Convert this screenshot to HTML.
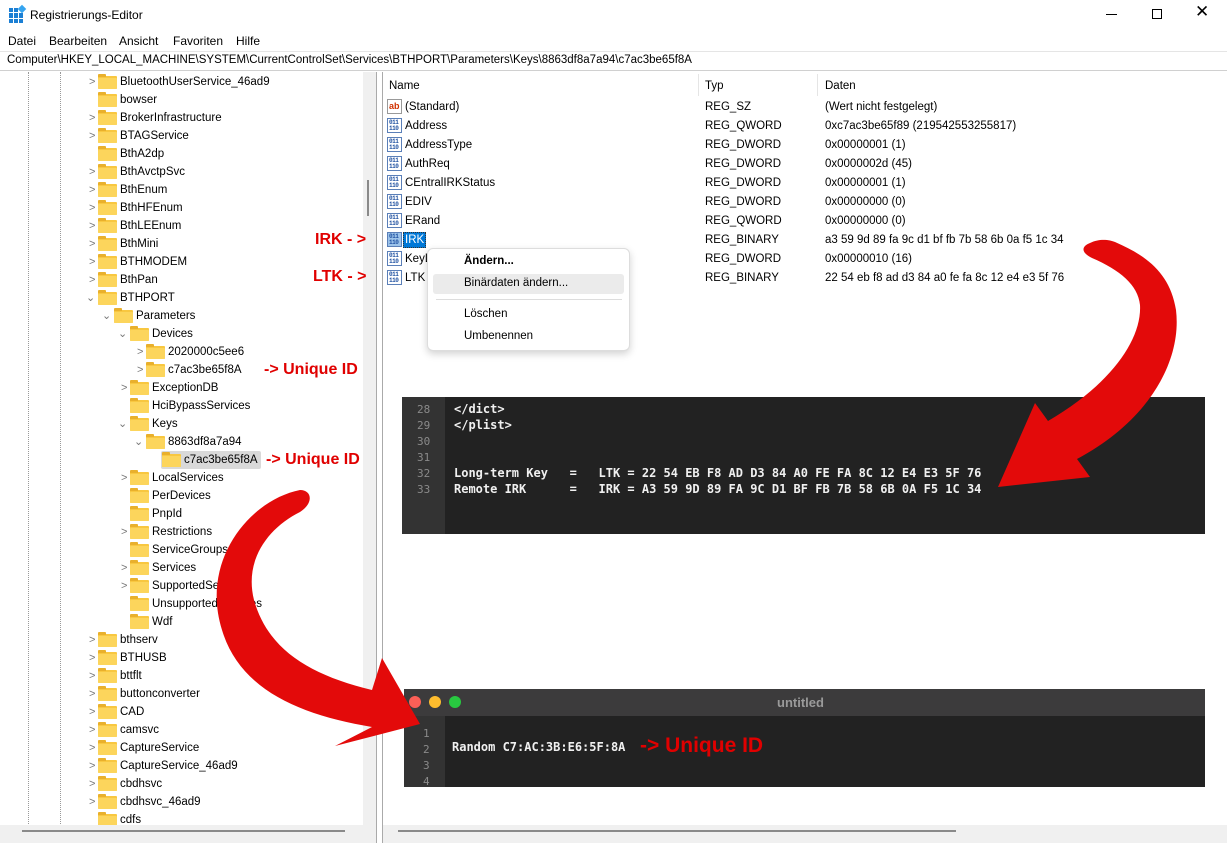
<!DOCTYPE html>
<html><head><meta charset="utf-8"><style>
*{margin:0;padding:0;box-sizing:border-box}
body{width:1227px;height:843px;overflow:hidden;background:#fff;font-family:"Liberation Sans",sans-serif;font-size:12px;color:#000;position:relative}
.a{position:absolute;white-space:nowrap}
.r{position:absolute;height:18px;line-height:18px;white-space:nowrap;font-size:11.5px}
.f{position:absolute;top:3px;width:19px;height:13px;background:#f8c740;border-radius:1px}
.f:before{content:"";position:absolute;left:0;top:-2px;width:8px;height:3px;background:#e9b02c;border-radius:1px 1px 0 0}
.f:after{content:"";position:absolute;left:0;top:2px;width:19px;height:11px;background:#fcd55c;border-radius:1px}
.c{position:absolute;top:0;color:#777;font-size:11px}
.t{position:absolute;top:0}
.ic{position:absolute;width:15px;height:15px;border:1px solid #5a7fb8;background:#fff;font:bold 6px/6px "Liberation Mono",monospace;color:#1d4fa0;letter-spacing:-0.5px;padding:1px 0 0 1px;overflow:hidden}
.red{color:#e00000;font-weight:bold;font-size:16px}
.code{font-family:"DejaVu Sans Mono","Liberation Mono",monospace;font-size:12px;color:#f0f0f0;font-weight:bold}
.ln{font-family:"DejaVu Sans Mono",monospace;font-size:11px;color:#8a8a8a}
.v{font-size:11.5px}
</style></head><body>
<div class="a" style="left:9px;top:8px;width:15px;height:15px;display:grid;grid-template-columns:repeat(3,4px);gap:1px">
<i style="background:#1b7fd4"></i><i style="background:#1b7fd4"></i><i style="background:#fff"></i><i style="background:#1b7fd4"></i><i style="background:#1b7fd4"></i><i style="background:#1b7fd4"></i><i style="background:#1b7fd4"></i><i style="background:#1b7fd4"></i><i style="background:#1b7fd4"></i></div>
<div class="a" style="left:19px;top:6px;width:6px;height:6px;background:#35a4f0;transform:rotate(45deg)"></div>
<div class="a" style="left:30px;top:8px;font-size:12px">Registrierungs-Editor</div>
<div class="a" style="left:1106px;top:14px;width:11px;height:1px;background:#000"></div>
<div class="a" style="left:1152px;top:9px;width:10px;height:10px;border:1px solid #000"></div>
<div class="a" style="left:1195px;top:2px;font-size:17px;font-weight:300">✕</div>
<div class="a" style="left:8px;top:34px">Datei</div>
<div class="a" style="left:49px;top:34px">Bearbeiten</div>
<div class="a" style="left:119px;top:34px">Ansicht</div>
<div class="a" style="left:173px;top:34px">Favoriten</div>
<div class="a" style="left:236px;top:34px">Hilfe</div>
<div class="a" style="left:0;top:51px;width:1227px;height:20px;border-top:1px solid #e5e5e5;border-bottom:1px solid #d0d0d0"></div>
<div class="a" style="left:7px;top:54px;font-size:11.5px">Computer\HKEY_LOCAL_MACHINE\SYSTEM\CurrentControlSet\Services\BTHPORT\Parameters\Keys\8863df8a7a94\c7ac3be65f8A</div>
<div class="a" style="left:0;top:72px;width:377px;height:771px;border-right:1px solid #aaa;overflow:hidden">
<div class="a" style="left:28px;top:0;height:760px;border-left:1px dotted #999"></div>
<div class="a" style="left:60px;top:0;height:760px;border-left:1px dotted #999"></div>
<div class="a" style="left:363px;top:0;width:14px;height:755px;background:#f0f0f0"></div>
<div class="a" style="left:367px;top:108px;width:2px;height:36px;background:#8a8a8a"></div>
<div style="position:absolute;left:0;top:1px;width:362px;height:760px;overflow:hidden">
<div class="r" style="top:0"><span class="c" style="left:89px">&gt;</span><span class="f" style="left:98px"></span><span class="t" style="left:120px">BluetoothUserService_46ad9</span></div>
<div class="r" style="top:18px"><span class="f" style="left:98px"></span><span class="t" style="left:120px">bowser</span></div>
<div class="r" style="top:36px"><span class="c" style="left:89px">&gt;</span><span class="f" style="left:98px"></span><span class="t" style="left:120px">BrokerInfrastructure</span></div>
<div class="r" style="top:54px"><span class="c" style="left:89px">&gt;</span><span class="f" style="left:98px"></span><span class="t" style="left:120px">BTAGService</span></div>
<div class="r" style="top:72px"><span class="f" style="left:98px"></span><span class="t" style="left:120px">BthA2dp</span></div>
<div class="r" style="top:90px"><span class="c" style="left:89px">&gt;</span><span class="f" style="left:98px"></span><span class="t" style="left:120px">BthAvctpSvc</span></div>
<div class="r" style="top:108px"><span class="c" style="left:89px">&gt;</span><span class="f" style="left:98px"></span><span class="t" style="left:120px">BthEnum</span></div>
<div class="r" style="top:126px"><span class="c" style="left:89px">&gt;</span><span class="f" style="left:98px"></span><span class="t" style="left:120px">BthHFEnum</span></div>
<div class="r" style="top:144px"><span class="c" style="left:89px">&gt;</span><span class="f" style="left:98px"></span><span class="t" style="left:120px">BthLEEnum</span></div>
<div class="r" style="top:162px"><span class="c" style="left:89px">&gt;</span><span class="f" style="left:98px"></span><span class="t" style="left:120px">BthMini</span></div>
<div class="r" style="top:180px"><span class="c" style="left:89px">&gt;</span><span class="f" style="left:98px"></span><span class="t" style="left:120px">BTHMODEM</span></div>
<div class="r" style="top:198px"><span class="c" style="left:89px">&gt;</span><span class="f" style="left:98px"></span><span class="t" style="left:120px">BthPan</span></div>
<div class="r" style="top:216px"><span class="c" style="left:86px">⌄</span><span class="f" style="left:98px"></span><span class="t" style="left:120px">BTHPORT</span></div>
<div class="r" style="top:234px"><span class="c" style="left:102px">⌄</span><span class="f" style="left:114px"></span><span class="t" style="left:136px">Parameters</span></div>
<div class="r" style="top:252px"><span class="c" style="left:118px">⌄</span><span class="f" style="left:130px"></span><span class="t" style="left:152px">Devices</span></div>
<div class="r" style="top:270px"><span class="c" style="left:137px">&gt;</span><span class="f" style="left:146px"></span><span class="t" style="left:168px">2020000c5ee6</span></div>
<div class="r" style="top:288px"><span class="c" style="left:137px">&gt;</span><span class="f" style="left:146px"></span><span class="t" style="left:168px">c7ac3be65f8A</span></div>
<div class="r" style="top:306px"><span class="c" style="left:121px">&gt;</span><span class="f" style="left:130px"></span><span class="t" style="left:152px">ExceptionDB</span></div>
<div class="r" style="top:324px"><span class="f" style="left:130px"></span><span class="t" style="left:152px">HciBypassServices</span></div>
<div class="r" style="top:342px"><span class="c" style="left:118px">⌄</span><span class="f" style="left:130px"></span><span class="t" style="left:152px">Keys</span></div>
<div class="r" style="top:360px"><span class="c" style="left:134px">⌄</span><span class="f" style="left:146px"></span><span class="t" style="left:168px">8863df8a7a94</span></div>
<div class="r" style="top:378px"><span class="a" style="left:161px;top:0;width:100px;height:18px;background:#d9d9d9;border-radius:2px"></span><span class="f" style="left:162px"></span><span class="t" style="left:184px">c7ac3be65f8A</span></div>
<div class="r" style="top:396px"><span class="c" style="left:121px">&gt;</span><span class="f" style="left:130px"></span><span class="t" style="left:152px">LocalServices</span></div>
<div class="r" style="top:414px"><span class="f" style="left:130px"></span><span class="t" style="left:152px">PerDevices</span></div>
<div class="r" style="top:432px"><span class="f" style="left:130px"></span><span class="t" style="left:152px">PnpId</span></div>
<div class="r" style="top:450px"><span class="c" style="left:121px">&gt;</span><span class="f" style="left:130px"></span><span class="t" style="left:152px">Restrictions</span></div>
<div class="r" style="top:468px"><span class="f" style="left:130px"></span><span class="t" style="left:152px">ServiceGroups</span></div>
<div class="r" style="top:486px"><span class="c" style="left:121px">&gt;</span><span class="f" style="left:130px"></span><span class="t" style="left:152px">Services</span></div>
<div class="r" style="top:504px"><span class="c" style="left:121px">&gt;</span><span class="f" style="left:130px"></span><span class="t" style="left:152px">SupportedServices</span></div>
<div class="r" style="top:522px"><span class="f" style="left:130px"></span><span class="t" style="left:152px">UnsupportedServices</span></div>
<div class="r" style="top:540px"><span class="f" style="left:130px"></span><span class="t" style="left:152px">Wdf</span></div>
<div class="r" style="top:558px"><span class="c" style="left:89px">&gt;</span><span class="f" style="left:98px"></span><span class="t" style="left:120px">bthserv</span></div>
<div class="r" style="top:576px"><span class="c" style="left:89px">&gt;</span><span class="f" style="left:98px"></span><span class="t" style="left:120px">BTHUSB</span></div>
<div class="r" style="top:594px"><span class="c" style="left:89px">&gt;</span><span class="f" style="left:98px"></span><span class="t" style="left:120px">bttflt</span></div>
<div class="r" style="top:612px"><span class="c" style="left:89px">&gt;</span><span class="f" style="left:98px"></span><span class="t" style="left:120px">buttonconverter</span></div>
<div class="r" style="top:630px"><span class="c" style="left:89px">&gt;</span><span class="f" style="left:98px"></span><span class="t" style="left:120px">CAD</span></div>
<div class="r" style="top:648px"><span class="c" style="left:89px">&gt;</span><span class="f" style="left:98px"></span><span class="t" style="left:120px">camsvc</span></div>
<div class="r" style="top:666px"><span class="c" style="left:89px">&gt;</span><span class="f" style="left:98px"></span><span class="t" style="left:120px">CaptureService</span></div>
<div class="r" style="top:684px"><span class="c" style="left:89px">&gt;</span><span class="f" style="left:98px"></span><span class="t" style="left:120px">CaptureService_46ad9</span></div>
<div class="r" style="top:702px"><span class="c" style="left:89px">&gt;</span><span class="f" style="left:98px"></span><span class="t" style="left:120px">cbdhsvc</span></div>
<div class="r" style="top:720px"><span class="c" style="left:89px">&gt;</span><span class="f" style="left:98px"></span><span class="t" style="left:120px">cbdhsvc_46ad9</span></div>
<div class="r" style="top:738px"><span class="f" style="left:98px"></span><span class="t" style="left:120px">cdfs</span></div>
</div>
<div class="a" style="left:0;top:753px;width:377px;height:18px;background:#f0f0f0"></div>
<div class="a" style="left:22px;top:758px;width:323px;height:2px;background:#8a8a8a"></div>
</div>
<div class="a" style="left:382px;top:72px;width:845px;height:771px;border-left:1px solid #aaa"></div>
<div class="a" style="left:698px;top:74px;height:22px;border-left:1px solid #e5e5e5"></div>
<div class="a" style="left:817px;top:74px;height:22px;border-left:1px solid #e5e5e5"></div>
<div class="a v" style="left:389px;top:80px">Name</div>
<div class="a v" style="left:705px;top:80px">Typ</div>
<div class="a v" style="left:825px;top:80px">Daten</div>
<div class="a" style="left:387px;top:99px;width:15px;height:15px;border:1px solid #999;font:bold 9px/12px 'Liberation Sans';color:#d03000;padding-left:1px">ab</div>
<div class="a v" style="left:405px;top:101px">(Standard)</div><div class="a v" style="left:705px;top:101px">REG_SZ</div><div class="a v" style="left:825px;top:101px">(Wert nicht festgelegt)</div>
<div class="ic" style="left:387px;top:118px">011<br>110</div><div class="a v" style="left:405px;top:120px">Address</div><div class="a v" style="left:705px;top:120px">REG_QWORD</div><div class="a v" style="left:825px;top:120px">0xc7ac3be65f89 (219542553255817)</div>
<div class="ic" style="left:387px;top:137px">011<br>110</div><div class="a v" style="left:405px;top:139px">AddressType</div><div class="a v" style="left:705px;top:139px">REG_DWORD</div><div class="a v" style="left:825px;top:139px">0x00000001 (1)</div>
<div class="ic" style="left:387px;top:156px">011<br>110</div><div class="a v" style="left:405px;top:158px">AuthReq</div><div class="a v" style="left:705px;top:158px">REG_DWORD</div><div class="a v" style="left:825px;top:158px">0x0000002d (45)</div>
<div class="ic" style="left:387px;top:175px">011<br>110</div><div class="a v" style="left:405px;top:177px">CEntralIRKStatus</div><div class="a v" style="left:705px;top:177px">REG_DWORD</div><div class="a v" style="left:825px;top:177px">0x00000001 (1)</div>
<div class="ic" style="left:387px;top:194px">011<br>110</div><div class="a v" style="left:405px;top:196px">EDIV</div><div class="a v" style="left:705px;top:196px">REG_DWORD</div><div class="a v" style="left:825px;top:196px">0x00000000 (0)</div>
<div class="ic" style="left:387px;top:213px">011<br>110</div><div class="a v" style="left:405px;top:215px">ERand</div><div class="a v" style="left:705px;top:215px">REG_QWORD</div><div class="a v" style="left:825px;top:215px">0x00000000 (0)</div>
<div class="ic" style="left:387px;top:232px;background:#9cc3ea">011<br>110</div><div class="a" style="left:403px;top:232px;width:23px;height:16px;background:#0078d7;border:1px dotted #333"></div><div class="a v" style="left:405px;top:234px;color:#fff">IRK</div><div class="a v" style="left:705px;top:234px">REG_BINARY</div><div class="a v" style="left:825px;top:234px">a3 59 9d 89 fa 9c d1 bf fb 7b 58 6b 0a f5 1c 34</div>
<div class="ic" style="left:387px;top:251px">011<br>110</div><div class="a v" style="left:405px;top:253px">KeyLength</div><div class="a v" style="left:705px;top:253px">REG_DWORD</div><div class="a v" style="left:825px;top:253px">0x00000010 (16)</div>
<div class="ic" style="left:387px;top:270px">011<br>110</div><div class="a v" style="left:405px;top:272px">LTK</div><div class="a v" style="left:705px;top:272px">REG_BINARY</div><div class="a v" style="left:825px;top:272px">22 54 eb f8 ad d3 84 a0 fe fa 8c 12 e4 e3 5f 76</div>
<div class="a" style="left:427px;top:248px;width:203px;height:103px;background:#fff;border:1px solid #ddd;border-radius:6px;box-shadow:0 3px 8px rgba(0,0,0,.18)"></div>
<div class="a v" style="left:464px;top:255px;font-weight:bold">Ändern...</div>
<div class="a" style="left:433px;top:274px;width:191px;height:20px;background:#ebebeb;border-radius:3px"></div>
<div class="a v" style="left:464px;top:277px">Binärdaten ändern...</div>
<div class="a" style="left:436px;top:299px;width:186px;height:1px;background:#ddd"></div>
<div class="a v" style="left:464px;top:308px">Löschen</div>
<div class="a v" style="left:464px;top:330px">Umbenennen</div>
<div class="a" style="left:383px;top:825px;width:844px;height:18px;background:#f0f0f0"></div>
<div class="a" style="left:398px;top:830px;width:558px;height:2px;background:#8a8a8a"></div>
<div class="a" style="left:402px;top:397px;width:803px;height:137px;background:#222"></div>
<div class="a" style="left:402px;top:397px;width:43px;height:137px;background:#333"></div>
<div class="a ln" style="left:417px;top:402px;line-height:16px">28<br>29<br>30<br>31<br>32<br>33</div>
<div class="a code" style="left:454px;top:401px;line-height:16px;white-space:pre">&lt;/dict&gt;
&lt;/plist&gt;


Long-term Key   =   LTK = 22 54 EB F8 AD D3 84 A0 FE FA 8C 12 E4 E3 5F 76
Remote IRK      =   IRK = A3 59 9D 89 FA 9C D1 BF FB 7B 58 6B 0A F5 1C 34</div>
<div class="a" style="left:404px;top:689px;width:801px;height:27px;background:#3c3b3c"></div>
<div class="a" style="left:409px;top:696px;width:12px;height:12px;border-radius:50%;background:#fc5f57"></div>
<div class="a" style="left:429px;top:696px;width:12px;height:12px;border-radius:50%;background:#fdbc2e"></div>
<div class="a" style="left:449px;top:696px;width:12px;height:12px;border-radius:50%;background:#28c840"></div>
<div class="a" style="left:777px;top:695px;color:#9a9a9a;font-weight:bold;font-size:13px">untitled</div>
<div class="a" style="left:404px;top:716px;width:801px;height:71px;background:#222"></div>
<div class="a" style="left:404px;top:716px;width:41px;height:71px;background:#333"></div>
<div class="a ln" style="left:423px;top:726px;line-height:16px">1<br>2<br>3<br>4</div>
<div class="a code" style="left:452px;top:740px">Random C7:AC:3B:E6:5F:8A</div>
<div class="a red" style="left:640px;top:734px;font-size:21px">-&gt; Unique ID</div>
<div class="a red" style="left:315px;top:231px">IRK - &gt;</div>
<div class="a red" style="left:313px;top:268px">LTK - &gt;</div>
<div class="a red" style="left:264px;top:361px">-&gt; Unique ID</div>
<div class="a red" style="left:266px;top:451px">-&gt; Unique ID</div>
<svg class="a" style="left:0;top:0" width="1227" height="843">
<path fill="#e30a0a" d="M1090,243 C1100,238 1110,240 1115,242 C1145,255 1170,272 1176,310 C1182,360 1150,420 1077,459 L1090,477 L998,487 L1035,403 L1048,421 C1110,385 1142,340 1140,305 C1138,285 1120,270 1092,258 C1080,252 1082,246 1090,243 Z"/>
<path fill="#e30a0a" d="M300,490 C250,500 200,560 222,630 C240,690 300,715 372,727 L335,746 L420,724 L382,658 L372,690 C310,675 268,650 254,600 C244,560 268,528 300,512 C314,503 312,490 300,490 Z"/>
</svg>
</body></html>
